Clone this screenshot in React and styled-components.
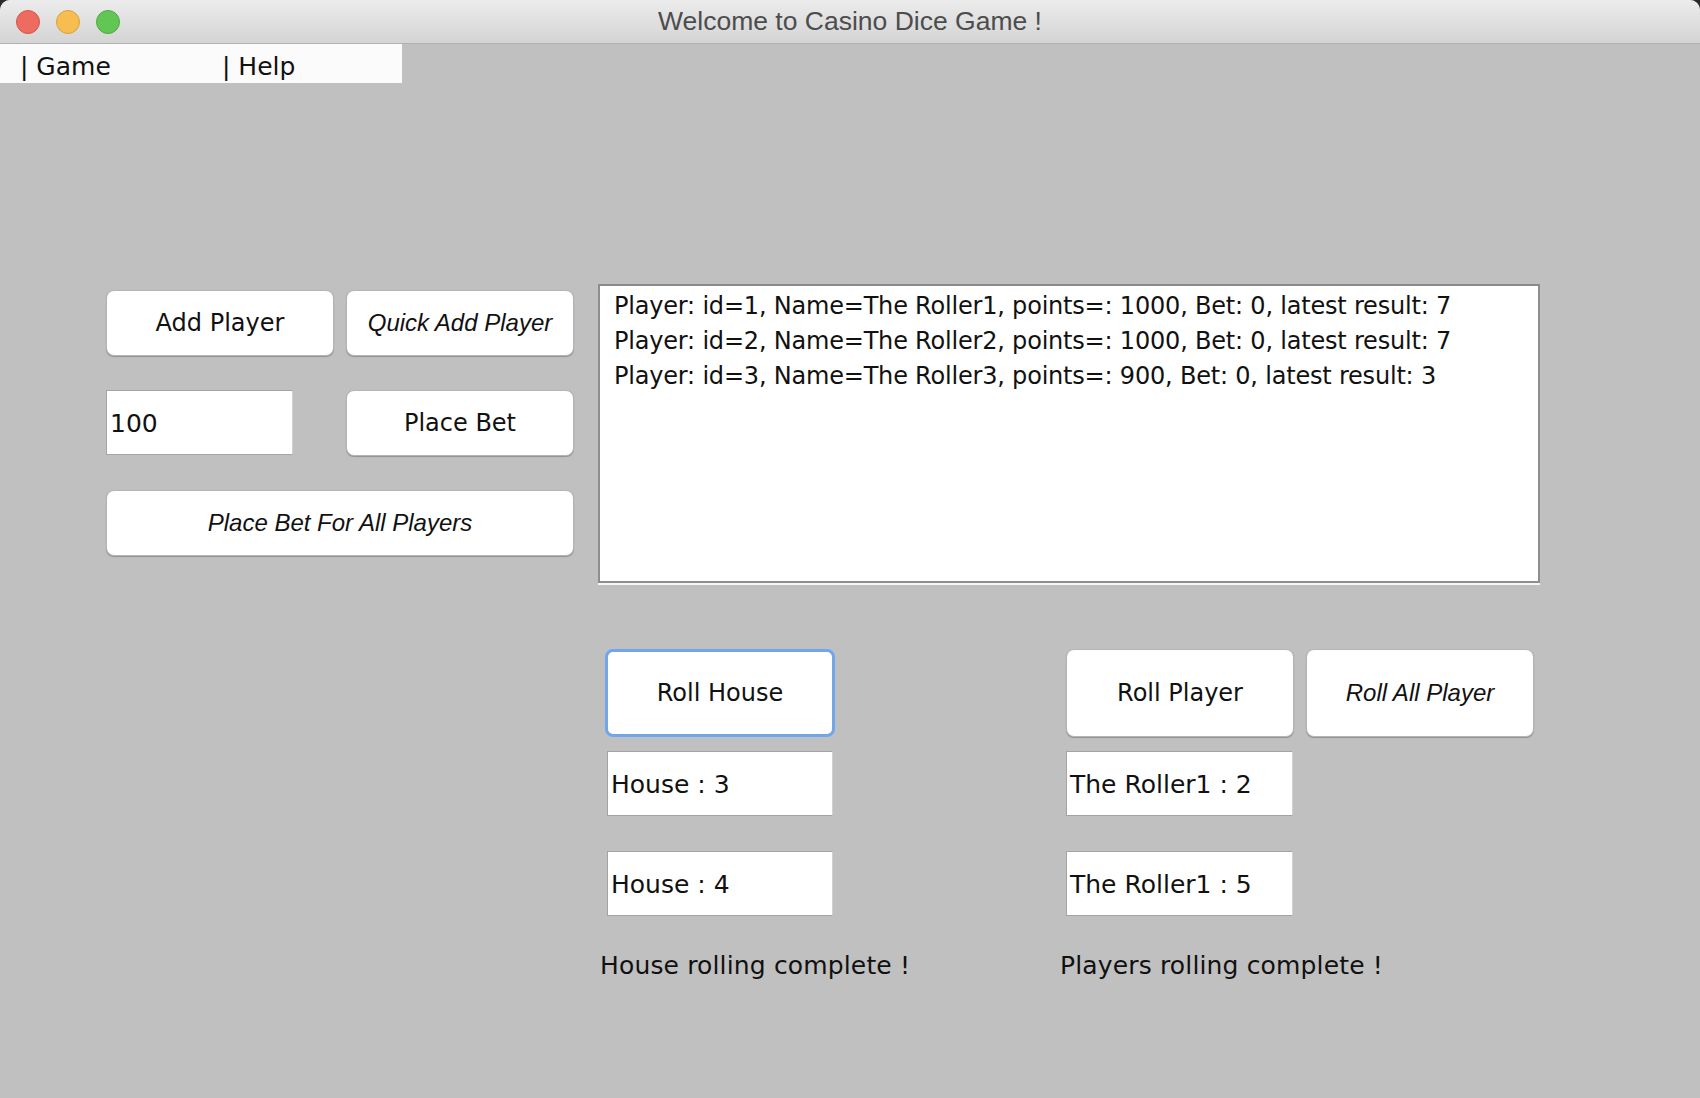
import React from 'react';
import styled, { createGlobalStyle } from 'styled-components';

const GlobalStyle = createGlobalStyle`
  html, body {
    margin: 0;
    padding: 0;
    background: #2b2b2b;
  }
  * {
    box-sizing: border-box;
  }
`;

const UI_FONT = `"DejaVu Sans", "Liberation Sans", sans-serif`;
const TITLE_FONT = `"Liberation Sans", Arial, sans-serif`;

const Window = styled.div`
  width: 1700px;
  height: 1098px;
  display: flex;
  flex-direction: column;
  border-radius: 10px 10px 0 0;
  overflow: hidden;
  background: #c0c0c0;
`;

const TitleBar = styled.div`
  position: relative;
  height: 44px;
  flex-shrink: 0;
  display: flex;
  align-items: center;
  justify-content: center;
  background: linear-gradient(#ececec, #d4d4d4);
  border-bottom: 1px solid #b1b1b1;
`;

const Lights = styled.div`
  position: absolute;
  left: 16px;
  top: 10px;
  display: flex;
  gap: 16px;
`;

const Light = styled.span`
  width: 24px;
  height: 24px;
  border-radius: 50%;
  background: ${(props) => props.$color};
  border: 1px solid ${(props) => props.$edge};
`;

const Title = styled.div`
  font-family: ${TITLE_FONT};
  font-size: 26.5px;
  line-height: 47px;
  color: #4d4d4d;
`;

const Body = styled.div`
  flex: 1;
  display: flex;
  flex-direction: column;
`;

const MenuBar = styled.div`
  width: 402px;
  height: 39px;
  display: flex;
  padding: 6px 0 0 20px;
  background: #fbfbfb;
`;

const MenuItem = styled.div`
  flex-shrink: 0;
  width: ${(props) => props.$width || 'auto'};
  font-family: ${UI_FONT};
  font-size: 25px;
  line-height: 33px;
  white-space: nowrap;
  color: #111;
`;

const Main = styled.div`
  display: flex;
  align-items: flex-start;
  gap: 24px;
  padding: 201px 0 0 106px;
`;

const ControlGrid = styled.div`
  margin-top: 6px;
  display: grid;
  grid-template-columns: 228px 228px;
  grid-auto-rows: 66px;
  column-gap: 12px;
  row-gap: 34px;
`;

const Button = styled.button`
  flex-shrink: 0;
  width: ${(props) => props.$width || '100%'};
  height: ${(props) => props.$height || '100%'};
  grid-column: ${(props) => (props.$span ? '1 / span 2' : 'auto')};
  padding: 0;
  margin: 0;
  background: #fff;
  border: ${(props) => (props.$focused ? '3px solid #72a6e6' : '1px solid #b4b4b4')};
  border-radius: 8px;
  box-shadow: ${(props) =>
    props.$focused ? '0 0 2px #a9c8f0' : '0 1px 1px rgba(0, 0, 0, 0.25)'};
  font-family: ${(props) => (props.$italic ? TITLE_FONT : UI_FONT)};
  font-style: ${(props) => (props.$italic ? 'italic' : 'normal')};
  font-size: 24px;
  color: #111;
  cursor: pointer;
`;

const Field = styled.div`
  width: ${(props) => props.$width};
  height: 65px;
  display: flex;
  align-items: center;
  padding: 2px 0 0 3px;
  margin-left: ${(props) => props.$inset || '0'};
  background: #fff;
  border: 1px solid #a3a3a3;
  border-right-color: #d0d0d0;
  font-family: ${UI_FONT};
  font-size: 25px;
  white-space: nowrap;
  color: #111;
`;

const RightColumn = styled.div`
  width: 942px;
  display: flex;
  flex-direction: column;
`;

const Output = styled.div`
  height: 299px;
  padding: 3px 14px;
  background: #fff;
  border: 2px solid #8e8e8e;
  border-top-color: #8a8a8a;
  box-shadow: 0 2px 0 #f6f6f6;
  font-family: ${UI_FONT};
  font-size: 24px;
  letter-spacing: -0.2px;
  line-height: 35px;
  white-space: nowrap;
  color: #111;
`;

const RollRow = styled.div`
  margin-top: 66px;
  padding: 0 6px 0 2px;
  display: flex;
  justify-content: space-between;
`;

const RollGroup = styled.div`
  display: flex;
  flex-direction: column;
  width: ${(props) => props.$width};
`;

const ButtonRow = styled.div`
  display: flex;
  gap: 12px;
  margin-left: ${(props) => props.$inset};
`;

const FieldStack = styled.div`
  display: flex;
  flex-direction: column;
  gap: 35px;
  margin-top: 14px;
`;

const Status = styled.div`
  margin: 36px 0 0 ${(props) => props.$shift || '0'};
  font-family: ${UI_FONT};
  font-size: 25px;
  letter-spacing: 0.15px;
  line-height: 28px;
  white-space: nowrap;
  color: #111;
`;

const players = [
  { id: 1, name: 'The Roller1', points: 1000, bet: 0, result: 7 },
  { id: 2, name: 'The Roller2', points: 1000, bet: 0, result: 7 },
  { id: 3, name: 'The Roller3', points: 900, bet: 0, result: 3 },
];

const App = () => {
  return (
    <>
      <GlobalStyle />
      <Window>
        <TitleBar>
          <Lights>
            <Light $color="#ee6b5f" $edge="#d5554a" />
            <Light $color="#f6be50" $edge="#d9a13a" />
            <Light $color="#62c655" $edge="#4ea943" />
          </Lights>
          <Title>Welcome to Casino Dice Game !</Title>
        </TitleBar>
        <Body>
          <MenuBar>
            <MenuItem $width="202px">| Game</MenuItem>
            <MenuItem>| Help</MenuItem>
          </MenuBar>
          <Main>
            <ControlGrid>
              <Button>Add Player</Button>
              <Button $italic>Quick Add Player</Button>
              <Field $width="187px">100</Field>
              <Button>Place Bet</Button>
              <Button $italic $span>Place Bet For All Players</Button>
            </ControlGrid>
            <RightColumn>
              <Output>
                {players.map((p) => (
                  <div key={p.id}>
                    Player: id={p.id}, Name={p.name}, points=: {p.points}, Bet: {p.bet}, latest result: {p.result}
                  </div>
                ))}
              </Output>
              <RollRow>
                <RollGroup $width="240px">
                  <ButtonRow $inset="5px">
                    <Button $focused $width="230px" $height="88px">Roll House</Button>
                  </ButtonRow>
                  <FieldStack>
                    <Field $width="226px" $inset="7px">House : 3</Field>
                    <Field $width="226px" $inset="7px">House : 4</Field>
                  </FieldStack>
                  <Status>House rolling complete !</Status>
                </RollGroup>
                <RollGroup $width="472px">
                  <ButtonRow $inset="4px">
                    <Button $width="228px" $height="88px">Roll Player</Button>
                    <Button $italic $width="228px" $height="88px">Roll All Player</Button>
                  </ButtonRow>
                  <FieldStack>
                    <Field $width="227px" $inset="4px">The Roller1 : 2</Field>
                    <Field $width="227px" $inset="4px">The Roller1 : 5</Field>
                  </FieldStack>
                  <Status $shift="-2px">Players rolling complete !</Status>
                </RollGroup>
              </RollRow>
            </RightColumn>
          </Main>
        </Body>
      </Window>
    </>
  );
};

export default App;
